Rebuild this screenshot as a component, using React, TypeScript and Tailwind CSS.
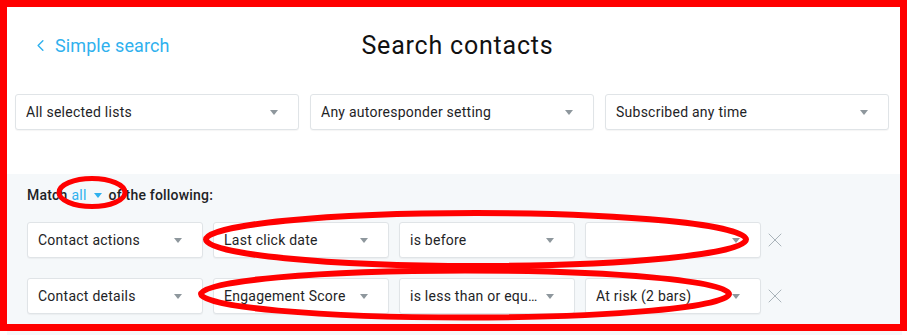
import { ChevronLeft, X } from 'lucide-react';

const Caret = ({ className = 'border-t-[#8e979d]' }: { className?: string }) => (
    <span className={`inline-block w-0 h-0 border-l-[4px] border-r-[4px] border-t-[5px] border-l-transparent border-r-transparent ${className}`} />
);

const Select = ({ label, className = '' }: { label: string; className?: string }) => (
    <div className={`flex items-center h-[36px] bg-white border border-[#e0e4e7] rounded-[3px] shadow-[0_1px_1px_rgba(0,0,0,0.04)] pl-[10px] pr-[20px] ${className}`}>
        <span className="flex-1 min-w-0 truncate pr-[6px] text-[14px] tracking-[0.25px] text-[#1e2326]">{label}</span>
        <Caret />
    </div>
);

const rows = [
    ['Contact actions', 'Last click date', 'is before', ''],
    ['Contact details', 'Engagement Score', 'is less than or equal to', 'At risk (2 bars)'],
];

export default function App() {
    return (
        <div className="relative w-[909px] h-[335px] bg-white overflow-hidden font-['Roboto',sans-serif]">
            <div className="grid grid-cols-[1fr_auto_1fr] items-center h-[90px]">
                <a className="flex items-center gap-[5px] pl-[31px] text-[18px] tracking-[0.1px] text-[#2fb1ee]">
                    <ChevronLeft className="size-[19px]" strokeWidth={1.8} />
                    Simple search
                </a>
                <h1 className="text-[25px] tracking-[0.8px] text-[#111] pl-[6px] pt-[2px]">Search contacts</h1>
                <div />
            </div>

            <div className="grid grid-cols-3 gap-[11px] mt-[4px] pl-[15px] pr-[20px]">
                <Select label="All selected lists" />
                <Select label="Any autoresponder setting" />
                <Select label="Subscribed any time" />
            </div>

            <div className="mt-[44px] mx-[7px] h-[161px] bg-[#f5f8fa] pl-[20px] pt-[11px]">
                <p className="flex items-center text-[14px] font-medium tracking-[0.2px] text-[#1e2326] leading-[20px]">
                    Match
                    <span className="ml-[4px] text-[#2fb1ee] font-normal">all</span>
                    <span className="ml-[7px] mr-[7px] flex"><Caret className="border-t-[#2fb1ee]" /></span>
                    of the following:
                </p>
                <div className="mt-[17px] flex flex-col gap-[20px]">
                    {rows.map((row, i) => (
                        <div key={i} className="flex items-center">
                            <div className="grid grid-cols-[176px_176px_176px_176px] gap-[10px]">
                                {row.map((label, j) => (
                                    <Select key={j} label={label} />
                                ))}
                            </div>
                            <X className="ml-[2px] size-[24px] text-[#aab4ba]" strokeWidth={1} />
                        </div>
                    ))}
                </div>
            </div>

            {/* annotation layer */}
            <svg className="absolute inset-0 pointer-events-none" width="909" height="335" viewBox="0 0 909 335">
                <rect x="3.5" y="3.5" width="900" height="324" fill="none" stroke="#ff0000" strokeWidth="7" />
                <ellipse cx="92" cy="192.5" rx="33" ry="14" fill="none" stroke="#ff0000" strokeWidth="5" />
                <ellipse cx="476" cy="239.5" rx="270" ry="26.5" fill="none" stroke="#ff0000" strokeWidth="6" />
                <ellipse cx="465" cy="294" rx="264" ry="23.5" fill="none" stroke="#ff0000" strokeWidth="6" />
            </svg>
        </div>
    );
}
